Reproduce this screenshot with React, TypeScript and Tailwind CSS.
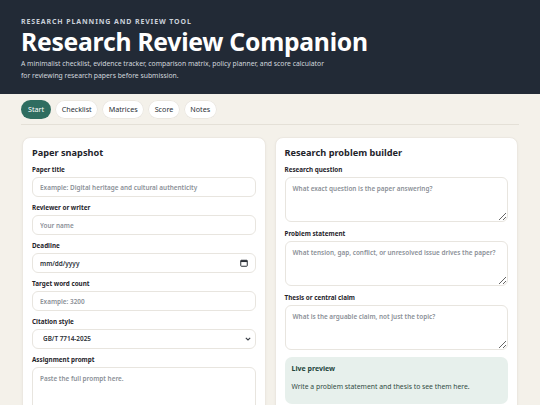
const font = { fontFamily: '"Noto Sans", "Open Sans", sans-serif' };

const tabs = ['Start', 'Checklist', 'Matrices', 'Score', 'Notes'];

const Label = ({ children }: { children: React.ReactNode }) => (
  <label className="block text-[6.3px] font-bold text-[#1f242b] leading-[10px] mb-[2px]">{children}</label>
);

const fieldBase =
  'block w-full rounded-[6px] border border-[#e8e5df] bg-white px-[7px] text-[6.4px] font-semibold text-[#2a2f36] placeholder:text-[#8b9097] outline-none';

const inputCls = fieldBase + ' h-[20px]';
const areaCls = fieldBase + ' py-[6px]';

const CalendarIcon = () => (
  <svg width="8" height="8" viewBox="0 0 8 8" className="absolute right-[8px] top-[6px]" fill="none">
    <rect x="0.75" y="1.25" width="6.5" height="6" rx="0.6" stroke="#2a2f36" strokeWidth="1" />
    <rect x="0.75" y="1.25" width="6.5" height="1.8" fill="#2a2f36" />
  </svg>
);

const Chevron = () => (
  <svg width="6" height="4" viewBox="0 0 6 4" className="absolute right-[5px] top-[8px]" fill="none">
    <path d="M0.8 0.8 L3 3 L5.2 0.8" stroke="#3a3f46" strokeWidth="1.1" />
  </svg>
);

export default function App() {
  return (
    <div className="min-h-[405px] bg-[#f4f1ea] text-[#1f242b]" style={font}>
      <header className="bg-[#222a36] px-[21px] pt-[17px] pb-[13px]">
        <p className="text-[7px] font-bold tracking-[0.125em] text-[#c9d0d9] leading-[10px]">
          RESEARCH PLANNING AND REVIEW TOOL
        </p>
        <h1 className="text-[24.7px] font-bold text-white leading-[30px] tracking-[-0.01em]">
          Research Review Companion
        </h1>
        <p className="mt-[1px] text-[6.8px] leading-[11.5px] text-[#d3d8df]">
          A minimalist checklist, evidence tracker, comparison matrix, policy planner, and score calculator
          <br />
          for reviewing research papers before submission.
        </p>
      </header>

      <div className="px-[21px]">
        <nav className="flex gap-[4px] pt-[6px] pb-[5px] border-b border-[#e4e0d7]">
          {tabs.map((t, i) => (
            <button
              key={t}
              className={
                i === 0
                  ? 'h-[19px] px-[7px] rounded-full bg-[#2f6d60] text-white text-[7.2px] leading-none'
                  : 'h-[19px] px-[6.5px] rounded-full bg-white shadow-[inset_0_0_0_1px_#ebe7e0] text-[#2a2f36] text-[7.2px] leading-none'
              }
            >
              {t}
            </button>
          ))}
        </nav>
      </div>

      <main className="grid grid-cols-2 gap-[9px] px-[22px] pt-[12px]">
        <section className="rounded-[8px] bg-white border border-[#ece8e1] shadow-[0_1px_3px_rgba(0,0,0,0.04)] px-[9px] pt-[8px] pb-[10px]">
          <h2 className="text-[9.2px] font-bold leading-[14px] mb-[5px]">Paper snapshot</h2>
          <div className="flex flex-col gap-[6px]">
            <div>
              <Label>Paper title</Label>
              <input className={inputCls} placeholder="Example: Digital heritage and cultural authenticity" />
            </div>
            <div>
              <Label>Reviewer or writer</Label>
              <input className={inputCls} placeholder="Your name" />
            </div>
            <div>
              <Label>Deadline</Label>
              <div className="relative">
                <input className={inputCls} defaultValue="mm/dd/yyyy" readOnly />
                <CalendarIcon />
              </div>
            </div>
            <div>
              <Label>Target word count</Label>
              <input className={inputCls} placeholder="Example: 3200" />
            </div>
            <div>
              <Label>Citation style</Label>
              <div className="relative">
                <select className={inputCls + ' appearance-none px-[10px]'} defaultValue="GB/T 7714-2025">
                  <option>GB/T 7714-2025</option>
                  <option>APA 7</option>
                  <option>MLA 9</option>
                </select>
                <Chevron />
              </div>
            </div>
            <div>
              <Label>Assignment prompt</Label>
              <textarea className={areaCls + ' h-[60px]'} placeholder="Paste the full prompt here." />
            </div>
          </div>
        </section>

        <section className="rounded-[8px] bg-white border border-[#ece8e1] shadow-[0_1px_3px_rgba(0,0,0,0.04)] px-[9px] pt-[8px] pb-[10px]">
          <h2 className="text-[9.2px] font-bold leading-[14px] mb-[5px]">Research problem builder</h2>
          <div className="flex flex-col gap-[7px]">
            <div>
              <Label>Research question</Label>
              <textarea className={areaCls + ' h-[45px]'} placeholder="What exact question is the paper answering?" />
            </div>
            <div>
              <Label>Problem statement</Label>
              <textarea
                className={areaCls + ' h-[45px]'}
                placeholder="What tension, gap, conflict, or unresolved issue drives the paper?"
              />
            </div>
            <div>
              <Label>Thesis or central claim</Label>
              <textarea className={areaCls + ' h-[45px]'} placeholder="What is the arguable claim, not just the topic?" />
            </div>
            <div className="rounded-[7px] bg-[#e7f0ec] px-[7px] pt-[7px] pb-[12px]">
              <h3 className="text-[7px] font-bold text-[#24463c] leading-[10px]">Live preview</h3>
              <p className="mt-[8px] text-[6.8px] text-[#2f4a42] leading-[10px]">
                Write a problem statement and thesis to see them here.
              </p>
            </div>
          </div>
        </section>
      </main>
    </div>
  );
}
